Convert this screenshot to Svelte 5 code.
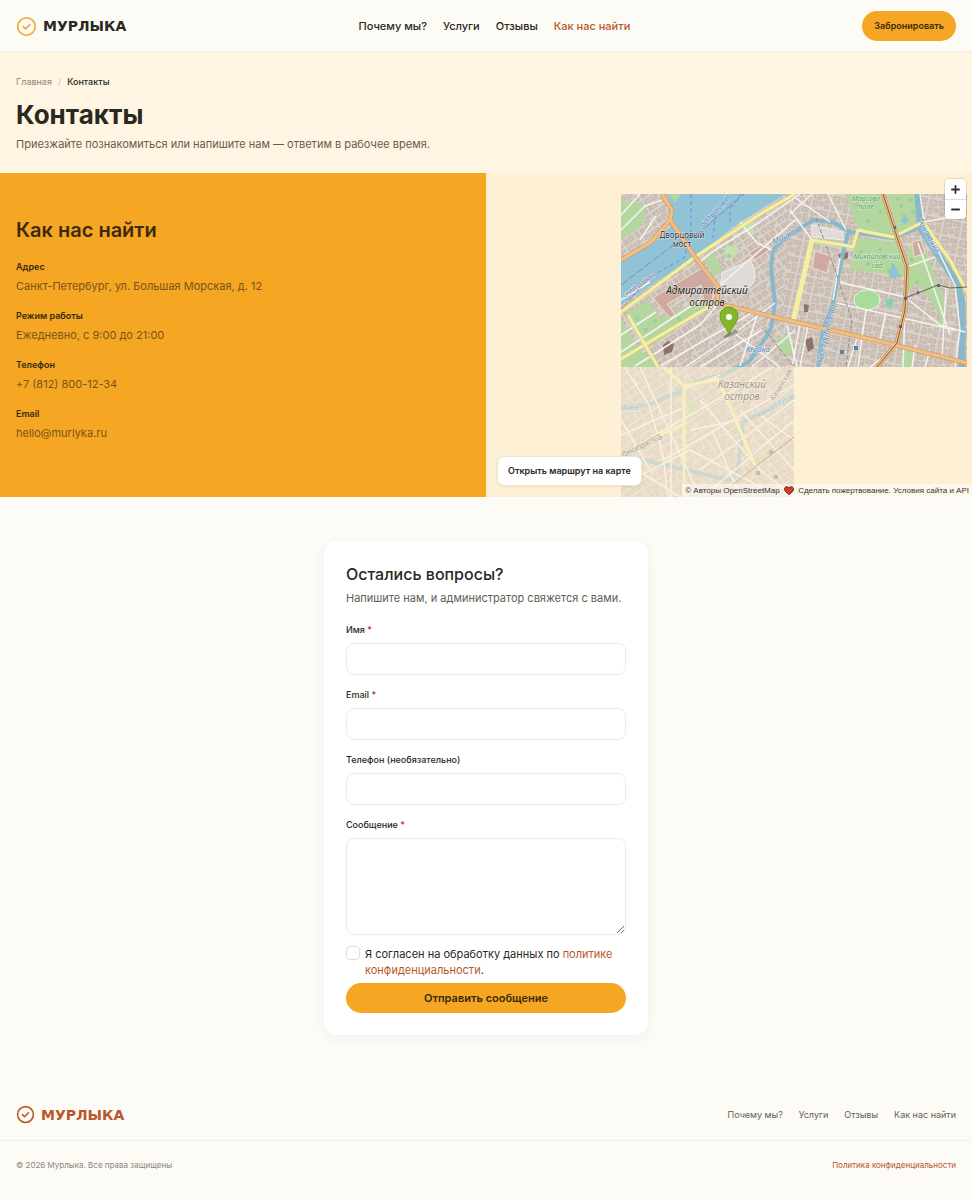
<script>
    const links = [
        { label: 'Почему мы?', href: '#why' },
        { label: 'Услуги', href: '#services' },
        { label: 'Отзывы', href: '#reviews' },
        { label: 'Как нас найти', href: '#contacts', active: true },
    ];

    const contacts = [
        { title: 'Адрес', text: 'Санкт-Петербург, ул. Большая Морская, д. 12' },
        { title: 'Режим работы', text: 'Ежедневно, с 9:00 до 21:00' },
        { title: 'Телефон', text: '+7 (812) 800-12-34', href: 'tel:+78128001234' },
        { title: 'Email', text: 'hello@murlyka.ru', href: 'mailto:hello@murlyka.ru' },
    ];

    // Rivers and canals, drawn as thick lines
    const canals = [
        'M621 407L649 405L683 390L696 382L724 374L749 362L766 337L771 328L775 303L771 267L773 250L783 240L795 232L813 220L833 222L850 232L893 238L918 228',
        'M848 233L842 257L833 303L823 330L818 367',
        'M794 395L743 422L738 470L729 480L686 470L643 460',
    ];

    const whiteRoads = [
        'M621 230L645 206L662 200M621 215L640 194M640 240L656 216',
        'M718 287L795 220M700 262L712 252L760 222L800 194M740 222L757 243L772 250',
        'M621 335L656 312M635 366L700 325L717 305M621 352L700 300M660 366L757 310',
        'M685 367L725 340L775 303M700 367L762 330M740 366L757 316M752 367L795 330',
        'M790 210L812 240M790 194L830 222M812 194L790 214M828 194L846 230',
        'M812 240L800 290M838 282L905 297M837 303L955 330M840 258L833 300',
        'M905 297L940 325L965 332M918 243L950 335M907 267L935 257M946 288L942 358',
        'M920 194L924 222L945 218L967 216M924 222L955 285L960 330L955 367',
        'M866 310L858 367M886 314L880 340M800 325L792 367M808 325L800 367',
        'M848 367L858 335M905 310L903 367M915 345L912 367M930 350L925 367',
        'M787 325L797 367M621 300L650 282M730 330L780 367M870 367L900 345',
    ];

    const fadedRoads = [
        'M621 362L649 405L663 455L668 497M621 435L685 407M621 455L794 355',
        'M663 460L794 385M683 390L720 375M621 485L690 450L780 497',
        'M700 400L760 470L794 497M700 470L794 400M740 410L794 470',
        'M621 460L680 497M690 430L740 420M703 497L794 420M640 367L700 497',
        'M621 420L650 470M712 430L740 497M760 415L794 440M671 367L671 497',
    ];

    // Tree crowns in the parks
    const trees = [
        [857, 205], [868, 221], [880, 212], [891, 221], [874, 200],
        [868, 264], [880, 249], [889, 271], [861, 252], [900, 276],
        [901, 206], [911, 200], [904, 216], [913, 212], [898, 199],
        [637, 319], [646, 330], [655, 321], [669, 314], [679, 319],
        [722, 251], [731, 244], [729, 256], [917, 282], [912, 260],
    ];
</script>

{#snippet mark()}
    <svg class="mark" viewBox="0 0 24 24" aria-hidden="true">
        <circle cx="12" cy="12" r="10" />
        <path d="M8.2 12.2l2.6 2.6 5-5" />
    </svg>
{/snippet}

<header class="header">
    <a class="logo" href="#top">{@render mark()}<span>МУРЛЫКА</span></a>
    <nav class="nav" aria-label="Основное меню">
        {#each links as link}
            <a href={link.href} class:active={link.active}>{link.label}</a>
        {/each}
    </nav>
    <button class="button book" type="button">Забронировать</button>
</header>

<main>
    <section class="hero">
        <nav class="crumbs" aria-label="Навигация">
            <a href="#top">Главная</a>
            <span class="slash">/</span>
            <span class="current">Контакты</span>
        </nav>
        <h1>Контакты</h1>
        <p>Приезжайте познакомиться или напишите нам — ответим в рабочее время.</p>
    </section>

    <section class="location">
        <div class="info">
            <h2>Как нас найти</h2>
            <dl>
                {#each contacts as item}
                    <div>
                        <dt>{item.title}</dt>
                        <dd>
                            {#if item.href}
                                <a href={item.href}>{item.text}</a>
                            {:else}
                                {item.text}
                            {/if}
                        </dd>
                    </div>
                {/each}
            </dl>
        </div>

        <div class="map">
            <svg
                class="tiles"
                viewBox="486 173 486 324"
                preserveAspectRatio="xMaxYMin slice"
                role="img"
                aria-label="Карта центра Санкт-Петербурга"
            >
                <defs>
                    <clipPath id="main-tiles">
                        <path d="M621 194H967V367H621z" />
                    </clipPath>
                    <clipPath id="faded-tile">
                        <path d="M621 367H794V497H621z" />
                    </clipPath>
                    <pattern id="west" width="20" height="15" patternUnits="userSpaceOnUse" patternTransform="rotate(-34)">
                        <path class="street" d="M0 0H20V15H0z" />
                        <path class="block" d="M1 1H8V6H1zM9 1H19V4H15V7H9zM1 8H6V14H1zM7 8H13V13H10V14H7zM15 8H19V14H15z" />
                        <path class="yard" d="M3 3H6V5H3zM11 2H13V5H11zM9 10H11V12H9zM16 10H18V11H16z" />
                    </pattern>
                    <pattern id="east" width="19" height="17" patternUnits="userSpaceOnUse" patternTransform="rotate(12)">
                        <path class="street" d="M0 0H19V17H0z" />
                        <path class="block" d="M1 1H9V8H1zM10 1H18V6H10zM1 9H6V16H1zM7 9H12V14H7zM13 7H18V16H13z" />
                        <path class="yard" d="M3 3H7V5H5V6H3zM12 3H15V4H12zM3 11H4V14H3zM9 11H10V13H9zM15 9H17V12H15z" />
                    </pattern>
                </defs>

                <g clip-path="url(#main-tiles)">
                    <path fill="url(#west)" d="M621 194H800V367H621z" />
                    <path fill="url(#east)" d="M790 194H967V367H780z" />

                    <!-- Neva -->
                    <path class="water" d="M668 194H786L740 222L696 256L621 305V262L661 238L674 222z" />
                    <path class="ferry" d="M691 194V232L684 258L655 274M728 198L716 210L713 238M741 194L730 209V226" />
                    <path class="border" d="M621 285L672 246L700 232L744 194" />

                    <!-- Parks -->
                    <path class="park" d="M621 203C637 197 652 206 644 220C637 231 630 238 621 236zM669 194H681L675 203z" />
                    <path class="park" d="M625 315L648 300L660 318L706 298L713 303L655 344L642 342zM621 318L640 350L660 367H621zM703 258L713 251L722 270L714 277z" />
                    <path class="park" d="M845 194H883L897 237L858 228zM887 194H917V225L898 233zM857 238L897 242L905 256L907 277L878 273L850 270z" />
                    <path class="park" d="M908 248L922 240L948 310L943 320L918 282L908 292zM903 352L915 350L912 367H900zM776 340L790 333L793 352L783 357zM931 325L944 316V328z" />
                    <path class="garden" d="M723 250L731 242L740 250L730 262zM743 228L751 222L755 231L748 237z" />
                    {#each trees as [x, y]}
                        <circle class="tree" cx={x} cy={y} r="2" />
                    {/each}
                    <path class="pond" d="M892 263Q897 265 899 276Q892 282 889 275zM902 219Q906 215 909 220Q906 226 901 222z" />

                    <!-- Squares and landmarks -->
                    <path class="square" d="M722 273L750 260Q760 275 751 286L735 292L721 284zM812 225L842 232L844 240L812 237z" />
                    <path class="palace" d="M653 298L702 268L715 286L712 300L704 303L701 285L667 304L675 315L670 318zM749 253L765 243L769 250L755 260zM815 251L831 256L827 273L812 268zM912 242L921 240L925 253L914 257z" />
                    <path class="church" d="M663 345L668 341L674 344L672 352L664 355zM805 340L812 337L814 348L808 352zM804 304L809 305L808 312H804zM838 254L848 252V258L840 261z" />
                    <ellipse class="stadium" cx="867" cy="300" rx="13" ry="10" />
                    <path class="court" d="M886 299H893V307H886z" />

                    {#each canals as d}
                        <path class="canal" {d} />
                    {/each}
                    <path class="canal wide" d="M918 194L920 227L937 253L957 283L962 303V367" />

                    {#each whiteRoads as d}
                        <path class="white-road" {d} />
                    {/each}
                    <path class="rail" d="M816 218L835 270L852 320L846 367M621 310L650 276M765 330L794 367" />

                    <path class="yellow-road case" d="M621 312L695 257L762 213L795 194M628 315L658 367M621 359L656 338L717 302M812 240L843 245L853 247L858 230L893 237L923 222L950 260L967 292" />
                    <path class="yellow-road" d="M621 312L695 257L762 213L795 194M628 315L658 367M621 359L656 338L717 302M812 240L843 245L853 247L858 230L893 237L923 222L950 260L967 292" />
                    <path class="yellow-road thick" d="M812 240L793 322" />

                    <path class="orange-road case" d="M662 194L672 210L670 220L695 257L718 287L717 303L795 322L887 343L967 363M621 260L650 243L670 220M883 194L897 237L907 267L905 310L897 343L877 367" />
                    <path class="orange-road" d="M662 194L672 210L670 220L695 257L718 287L717 303L795 322L887 343L967 363M621 260L650 243L670 220M883 194L897 237L907 267L905 310L897 343L877 367" />
                    <path class="tram" d="M883 194L897 237L907 267L905 310L897 343L877 367M905 298L938 285L950 288L967 287" />
                    <path class="metro" d="M840 350H844V354H840zM854 346H858V350H854z" />
                    <path class="stop" d="M904 297H907V300H904zM917 291H919V294H917zM937 284H940V287H937zM894 226H896V229H894zM899 325H902V328H899z" />
                </g>

                <g clip-path="url(#faded-tile)" class="faded">
                    <path fill="url(#west)" d="M621 367H794V497H621z" />
                    <path class="park" d="M686 405L694 401L698 413L690 418z" />
                    {#each canals as d}
                        <path class="canal" {d} />
                    {/each}
                    {#each fadedRoads as d}
                        <path class="white-road" {d} />
                    {/each}
                    <path class="yellow-road" d="M656 360L684 386V497M684 386L718 379L755 465M660 435L684 424" />
                    <path class="tram" d="M732 485L794 437M621 455L660 434" />
                    <path class="metro" d="M756 471H760V475H756zM774 475H778V479H774zM769 450H773V454H769z" />
                </g>

                <g class="small-label">
                    <text x="682" y="238">Дворцовый</text>
                    <text x="682" y="247">мост</text>
                </g>
                <g class="district">
                    <text x="707" y="294">Адмиралтейский</text>
                    <text x="707" y="306">остров</text>
                </g>
                <g class="district pale">
                    <text x="742" y="388">Казанский</text>
                    <text x="742" y="400">остров</text>
                </g>
                <g class="park-label">
                    <text x="866" y="201">Марсово</text>
                    <text x="866" y="209">поле</text>
                    <text x="877" y="259">Михайловский</text>
                    <text x="877" y="268">сад</text>
                </g>
                <g class="water-label">
                    <text x="785" y="239" transform="rotate(-28 785 239)">Мойка</text>
                    <text x="758" y="352">Мойка</text>
                    <text x="926" y="236" transform="rotate(62 926 236)">Фонтанка</text>
                    <text x="829" y="334" transform="rotate(-77 829 334)">нал Грибоедова</text>
                    <text x="717" y="213" transform="rotate(-46 717 213)">Большая Н</text>
                </g>
                <g class="water-label pale">
                    <text x="630" y="410">ойка</text>
                    <text x="777" y="408" transform="rotate(-28 777 408)">канал Гриб</text>
                </g>
                <g class="road-label">
                    <text x="643" y="448" transform="rotate(-25 643 448)">Декабристов</text>
                    <text x="783" y="386" transform="rotate(-58 783 386)">Казанская</text>
                </g>
                <g class="road-label district-border">
                    <text x="640" y="287" transform="rotate(-35 640 287)">ский район</text>
                </g>

                <!-- Marker -->
                <ellipse class="shadow" cx="731" cy="334" rx="8" ry="2" transform="rotate(-25 731 334)" />
                <path class="pin" d="M729 335C727 327 720 323 720 316A9 9 0 0 1 738 316C738 323 731 327 729 335z" />
                <circle cx="729" cy="317" r="3" fill="#fff" />
            </svg>

            <div class="zoom">
                <button type="button" aria-label="Приблизить">
                    <svg viewBox="0 0 10 10"><path d="M1 5H9M5 1V9" /></svg>
                </button>
                <button type="button" aria-label="Отдалить">
                    <svg viewBox="0 0 10 10"><path d="M1 5H9" /></svg>
                </button>
            </div>

            <a class="route" href="#route">Открыть маршрут на карте</a>

            <p class="attribution">
                © <a href="#osm">Авторы OpenStreetMap</a>
                <svg viewBox="0 0 10 9" aria-hidden="true">
                    <path d="M5 8.6C3 7 .5 5.200.5 2.900C.5 .8 3.500-.2 5 2C6.500-.2 9.500.8 9.500 2.900C9.500 5.200 7 7 5 8.600z" />
                </svg>
                <a href="#donate">Сделать пожертвование</a>. <a href="#terms">Условия сайта и API</a>
            </p>
        </div>
    </section>

    <section class="questions">
        <form class="card" on:submit|preventDefault>
            <h2>Остались вопросы?</h2>
            <p>Напишите нам, и администратор свяжется с вами.</p>

            <div class="fields">
                <div class="field">
                    <label for="name">Имя <span>*</span></label>
                    <input id="name" type="text" required />
                </div>
                <div class="field">
                    <label for="email">Email <span>*</span></label>
                    <input id="email" type="email" required />
                </div>
                <div class="field">
                    <label for="phone">Телефон (необязательно)</label>
                    <input id="phone" type="tel" />
                </div>
                <div class="field">
                    <label for="message">Сообщение <span>*</span></label>
                    <textarea id="message" required></textarea>
                </div>
            </div>

            <div class="consent">
                <input id="consent" type="checkbox" required />
                <label for="consent">
                    Я согласен на обработку данных по
                    <a href="#privacy">политике конфиденциальности</a>.
                </label>
            </div>

            <button class="button send" type="submit">Отправить сообщение</button>
        </form>
    </section>
</main>

<footer>
    <div class="footer-top">
        <a class="logo rust" href="#top">{@render mark()}<span>МУРЛЫКА</span></a>
        <nav class="footer-nav" aria-label="Меню в подвале">
            {#each links as link}
                <a href={link.href}>{link.label}</a>
            {/each}
        </nav>
    </div>
    <div class="footer-bottom">
        <span>© 2026 Мурлыка. Все права защищены</span>
        <a href="#privacy">Политика конфиденциальности</a>
    </div>
</footer>

<style>
    :global(body) {
        background: #fdfbf6;
        color: #292821;
        font-family: Inter, 'Liberation Sans', sans-serif;
        font-size: 11px;
        line-height: 16px;
    }

    h1,
    h2,
    p,
    dl,
    dd {
        margin: 0;
    }

    a {
        color: inherit;
        text-decoration: none;
    }

    button,
    input,
    textarea {
        box-sizing: border-box;
        font: inherit;
    }

    /* Header */
    .header {
        display: flex;
        align-items: center;
        justify-content: space-between;
        padding: 11px 16px 10px;
        border-bottom: 1px solid #f3ebdf;
    }

    .logo {
        display: flex;
        align-items: center;
        gap: 6px;
        font-family: 'DejaVu Sans', sans-serif;
        font-size: 14px;
        font-weight: 700;
    }

    .mark {
        width: 21px;
        height: 21px;
        fill: none;
        stroke: #eeac3e;
        stroke-width: 2;
        stroke-linecap: round;
        stroke-linejoin: round;
    }

    .rust {
        color: #b9572a;
    }

    .rust .mark {
        width: 19px;
        height: 19px;
        stroke: #b9572a;
    }

    .nav {
        display: flex;
        gap: 16px;
        font-weight: 500;
    }

    .active {
        color: #b9572a;
    }

    .button {
        height: 30px;
        padding: 0 12px;
        border: 0;
        border-radius: 15px;
        background: #f5a623;
        color: #3b2a0c;
        font-weight: 600;
        cursor: pointer;
    }

    .book {
        font-size: 9px;
    }

    /* Page title */
    .hero {
        padding: 22px 16px 21px;
        background: #fff5e2;
    }

    .crumbs {
        display: flex;
        gap: 6px;
        font-size: 9px;
        color: #8d877a;
    }

    .slash {
        color: #cfc8b8;
    }

    .current {
        color: #292821;
        font-weight: 500;
    }

    h1 {
        margin-top: 7px;
        font-size: 26px;
        line-height: 36px;
    }

    .hero p {
        margin-top: 3px;
        color: #625e53;
    }

    /* Address and map */
    .location {
        display: grid;
        grid-template-columns: 1fr 1fr;
        min-height: 324px;
    }

    .info {
        padding: 43px 16px;
        background: #f5a623;
        color: #3b2a0c;
    }

    .info h2 {
        font-size: 20px;
        font-weight: 600;
        line-height: 28px;
    }

    .info dl {
        display: grid;
        gap: 14px;
        margin-top: 15px;
    }

    .info dt {
        font-size: 9px;
        font-weight: 600;
    }

    .info dd {
        margin-top: 3px;
        color: #78541a;
    }

    .map {
        position: relative;
        overflow: hidden;
        background: #fef0d4;
    }

    .tiles {
        position: absolute;
        inset: 0;
        width: 100%;
        height: 100%;
    }

    .street { fill: #dad1cb; }
    .block { fill: #c8bbb0; }
    .yard { fill: #d5cac2; }
    .water { fill: #91c3d6; }
    .park { fill: #b4d7a0; }
    .garden { fill: #c5dfae; }
    .tree { fill: #a2cc90; }
    .pond { fill: #8fc3d6; }
    .square { fill: #dfdbd8; stroke: #f3eeee; }
    .palace { fill: #cda9a0; stroke: #efdcd6; }
    .church { fill: #8c7468; }
    .stadium { fill: #a9dc9a; stroke: #e9f3e0; }
    .court { fill: #86d0b2; }
    .metro { fill: #5f7cae; }
    .stop { fill: #5a6480; }

    .canal,
    .white-road,
    .yellow-road,
    .orange-road,
    .tram,
    .rail,
    .ferry,
    .border {
        fill: none;
        stroke-linejoin: round;
    }

    .canal { stroke: #88b9cb; stroke-width: 4; }
    .canal.wide { stroke-width: 7; }
    .white-road { stroke: #f7f3f1; stroke-width: 1.5; }
    .yellow-road { stroke: #f3f0a2; stroke-width: 3; }
    .yellow-road.case { stroke: #cfcb84; stroke-width: 4; }
    .yellow-road.thick { stroke-width: 5; }
    .orange-road { stroke: #f0bd83; stroke-width: 3.5; }
    .orange-road.case { stroke: #ca8f58; stroke-width: 4.5; }
    .tram { stroke: #71603e; stroke-width: 1; }
    .rail { stroke: #948a90; stroke-dasharray: 4 2; }
    .ferry { stroke: #6b8ed8; stroke-dasharray: 4 3; }
    .border { stroke: #8b83ad; stroke-dasharray: 8 2; }
    .faded { opacity: 0.42; }

    .tiles text {
        font-family: 'Noto Sans', sans-serif;
        text-anchor: middle;
        paint-order: stroke;
        stroke: rgba(255, 255, 255, 0.6);
        stroke-width: 1px;
    }

    .small-label {
        font-size: 8px;
        fill: #333;
    }

    .district {
        font-size: 10px;
        font-style: italic;
        fill: #222;
    }

    .district.pale {
        fill: #9a9383;
    }

    .park-label {
        font-size: 7px;
        font-style: italic;
        fill: #4d9a5c;
    }

    .water-label {
        font-size: 8px;
        font-style: italic;
        fill: #5486b4;
    }

    .water-label.pale {
        fill: #a5b8ba;
    }

    .road-label {
        font-size: 7px;
        fill: #a39a88;
    }

    .road-label.district-border {
        fill: #8471a0;
    }

    .shadow { fill: rgba(40, 40, 40, 0.4); }
    .pin { fill: #83b72b; stroke: #6a9e20; }

    .zoom {
        position: absolute;
        top: 6px;
        right: 6px;
        overflow: hidden;
        width: 21px;
        border-radius: 4px;
        background: #fff;
        box-shadow: 0 0 0 1px rgba(0, 0, 0, 0.1);
    }

    .zoom button {
        display: grid;
        place-items: center;
        width: 100%;
        height: 20px;
        padding: 0;
        border: 0;
        background: none;
    }

    .zoom button + button {
        border-top: 1px solid #ddd;
    }

    .zoom svg {
        width: 9px;
        height: 9px;
        stroke: #333;
        stroke-width: 2;
        stroke-linecap: round;
    }

    .route {
        position: absolute;
        left: 11px;
        bottom: 11px;
        padding: 6px 10px;
        border: 1px solid #eee3cd;
        border-radius: 7px;
        background: #fff;
        box-shadow: 0 1px 3px rgba(60, 40, 0, 0.08);
        font-size: 9px;
        font-weight: 600;
    }

    .attribution {
        position: absolute;
        right: 0;
        bottom: 0;
        padding: 0 3px;
        background: rgba(255, 255, 255, 0.5);
        color: #333;
        font-family: 'Liberation Sans', Arial, sans-serif;
        font-size: 8px;
        line-height: 13px;
        white-space: nowrap;
    }

    .attribution svg {
        width: 10px;
        height: 9px;
        margin: 0 2px;
        vertical-align: middle;
        fill: #d93a20;
        stroke: #6e2a1c;
        stroke-width: 1;
    }

    /* Form */
    .questions {
        padding: 44px 16px;
    }

    .card {
        box-sizing: border-box;
        max-width: 324px;
        margin: 0 auto;
        padding: 22px;
        border-radius: 14px;
        background: #fff;
        box-shadow: 0 3px 14px rgba(60, 50, 20, 0.05);
    }

    .card h2 {
        font-size: 16px;
        font-weight: 500;
        line-height: 22px;
    }

    .card p {
        margin-top: 5px;
        color: #625e53;
    }

    .fields {
        display: grid;
        gap: 12px;
        margin-top: 16px;
    }

    .field {
        display: grid;
        gap: 5px;
    }

    .field label {
        font-size: 9px;
        font-weight: 500;
    }

    .field label span {
        color: #b3261e;
    }

    .field input,
    .field textarea {
        width: 100%;
        height: 32px;
        padding: 6px 10px;
        border: 1px solid #edebe5;
        border-radius: 8px;
        background: #fff;
    }

    .field textarea {
        display: block;
        height: 97px;
        resize: vertical;
    }

    .consent {
        display: flex;
        align-items: flex-start;
        gap: 5px;
        margin: 11px 0 5px;
    }

    .consent input {
        flex: none;
        appearance: none;
        width: 14px;
        height: 14px;
        margin: 0;
        border: 1px solid #dfddd6;
        border-radius: 4px;
        background: #fff;
    }

    .consent a,
    .footer-bottom a {
        color: #b9572a;
    }

    .send {
        width: 100%;
    }

    /* Footer */
    .footer-top,
    .footer-bottom {
        display: flex;
        align-items: center;
        justify-content: space-between;
        padding: 26px 16px 16px;
    }

    .footer-nav {
        display: flex;
        gap: 16px;
        color: #625e53;
        font-size: 9px;
    }

    .footer-bottom {
        padding: 16px 16px 27px;
        border-top: 1px solid #f4f0e6;
        color: #8d877a;
        font-size: 8px;
    }
</style>
